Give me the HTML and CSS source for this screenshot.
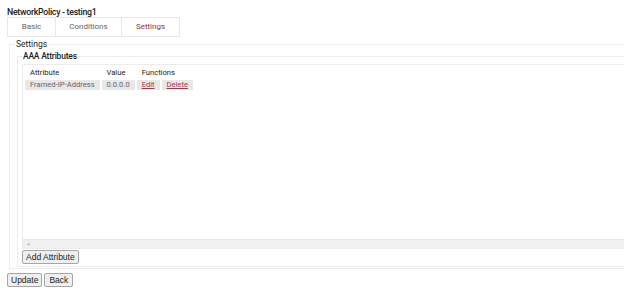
FILE: index.html
```html
<!DOCTYPE html>
<html lang="en">
<head>
  <meta charset="UTF-8">
  <title>NetworkPolicy - testing1</title>
  <link rel="stylesheet" href="styles.css">
</head>
<body>
  <div class="page">
    <h1 class="title">NetworkPolicy - testing1</h1>
    <ul class="tabs">
      <li>Basic</li>
      <li>Conditions</li>
      <li class="active">Settings</li>
    </ul>

    <fieldset class="outer">
      <legend>Settings</legend>
      <fieldset class="inner">
        <legend>AAA Attributes</legend>
        <div class="scrollbox">
          <table class="attrs">
            <thead>
              <tr><th>Attribute</th><th>Value</th><th colspan="2">Functions</th></tr>
            </thead>
            <tbody>
              <tr>
                <td>Framed-IP-Address</td>
                <td>0.0.0.0</td>
                <td><a href="#">Edit</a></td>
                <td><a href="#">Delete</a></td>
              </tr>
            </tbody>
          </table>
          <div class="hscroll"><span class="arrow">&#9664;</span></div>
        </div>
        <button class="btn add">Add Attribute</button>
      </fieldset>
    </fieldset>

    <div class="actions">
      <button class="btn">Update</button>
      <button class="btn">Back</button>
    </div>
  </div>
</body>
</html>
```

FILE: styles.css
```css
/* General */
html, body {
  margin: 0;
  background: #fff;
  overflow: hidden;
}
body {
  font-family: Roboto, "Noto Sans", sans-serif;
  color: #333;
}
.page {
  padding: 7px 0 0 7px;
  width: 760px;
}
.title {
  margin: 0;
  font-size: 8.8px;
  font-weight: 500;
  letter-spacing: -0.3px;
  line-height: 10px;
  color: #222;
}

/* Tabs */
.tabs {
  display: flex;
  list-style: none;
  margin: 0;
  padding: 0;
  height: 20px;
}
.tabs li {
  border: 1px solid #e8e8e8;
  border-left: none;
  font-size: 8px;
  color: #666;
  line-height: 18px;
  text-align: center;
  box-sizing: border-box;
  height: 20px;
}
.tabs li:first-child {
  border-left: 1px solid #e8e8e8;
  width: 49px;
}
.tabs li:nth-child(2) {
  width: 66px;
}
.tabs li.active {
  width: 58px;
  color: #8c3344;
}

/* Fieldsets */
fieldset {
  border: 1px solid #ececec;
  margin: 0;
}
legend {
  font-size: 8.5px;
  color: #222;
  line-height: 10px;
  padding: 0 1px;
}
.outer {
  margin: 2px 0 0 2px;
  padding: 0 0 1px 0;
}
.outer legend {
  margin-left: 5px;
}
.inner {
  padding: 0 0 2px 0;
  margin: 2px 0 0 7px;
}
.inner legend {
  margin-left: 4px;
  font-weight: 500;
  letter-spacing: -0.2px;
}
.scrollbox {
  border: 1px solid #ececec;
  height: 183px;
  margin: 3px 0 0 4px;
  position: relative;
}

/* Table */
.attrs {
  border-collapse: separate;
  border-spacing: 2px;
  margin: 0;
  font-size: 7.6px;
}
.attrs th {
  font-weight: 400;
  color: #222;
  text-align: left;
  padding: 0 5px;
  height: 11px;
  line-height: 11px;
}
.attrs td {
  background: #e8e8e8;
  color: #666;
  padding: 0 5px;
  height: 10px;
  line-height: 10px;
}
.attrs td:nth-child(3),
.attrs td:nth-child(4) {
  padding: 0 5px;
}
.attrs a {
  color: #a33a4f;
}

.hscroll {
  position: absolute;
  left: 0;
  right: 0;
  bottom: 0;
  height: 8px;
  background: #f0f0f0;
  border-top: 1px solid #e8e8e8;
}
.hscroll .arrow {
  font-size: 3px;
  color: #aaa;
  position: absolute;
  left: 4px;
  top: 2px;
}

/* Buttons */
.btn {
  font-family: "Liberation Sans", Arial, sans-serif;
  font-size: 8.5px;
  color: #222;
  background: #efefef;
  border: 1px solid #a6a6a6;
  border-radius: 2px;
  padding: 0 3px;
  height: 14px;
  line-height: 12px;
  display: block;
}
.btn.add {
  margin: 1px 0 0 4px;
}
.actions {
  margin-top: 4px;
  display: flex;
  gap: 2px;
}
.actions .btn:last-child {
  padding: 0 4px;
}
```
